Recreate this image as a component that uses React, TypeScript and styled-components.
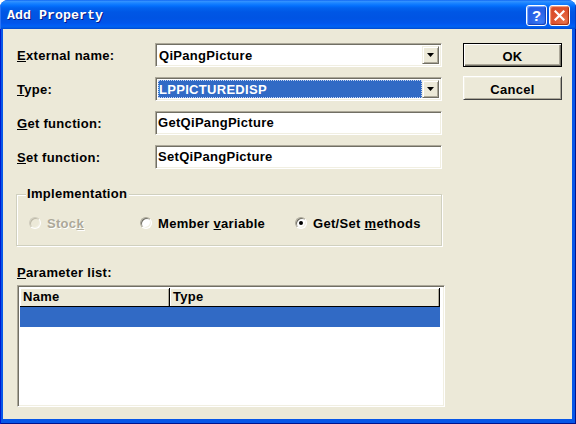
import React from "react";
import styled, { createGlobalStyle, css } from "styled-components";

const GlobalStyle = createGlobalStyle`
  html, body { margin: 0; padding: 0; background: #ffffff; }
  body { width: 576px; height: 424px; overflow: hidden; }
  #root { width: 576px; height: 424px; }
`;

const FACE = "#ECE9D8";
const SEL = "#316AC5";

const uiFont = css`
  font-family: "Liberation Sans", Arial, sans-serif;
  font-size: 13px;
  font-weight: bold;
  letter-spacing: 0.3px;
  color: #000;
`;

const sunken = css`
  border: 1px solid;
  border-color: #aca899 #ffffff #ffffff #aca899;
  box-shadow: inset 1px 1px 0 #716f64, inset -1px -1px 0 #f1efe2;
`;

const raised = css`
  border: 1px solid;
  border-color: #f1efe2 #716f64 #716f64 #f1efe2;
  box-shadow: inset 1px 1px 0 #ffffff, inset -1px -1px 0 #aca899;
`;

const Window = styled.div`
  width: 576px;
  height: 424px;
  display: flex;
  flex-direction: column;
  border-radius: 8px 8px 0 0;
  overflow: hidden;
  background: #0055ea;
`;

const TitleBar = styled.div`
  height: 29px;
  flex: none;
  display: flex;
  align-items: center;
  padding: 0 6px 0 7px;
  background: linear-gradient(
    to bottom,
    #0058ee 0px,
    #3a93ff 1px,
    #288eff 2px,
    #127dff 4px,
    #036ffc 6px,
    #0262ee 8px,
    #0057e5 12px,
    #0054e3 18px,
    #0055eb 23px,
    #005bf5 25px,
    #0062ef 27px,
    #0047cf 29px
  );
  box-shadow: inset 1px 0 0 #2b74f5, inset -1px 0 0 #0040c8;
`;

const Title = styled.div`
  flex: 1;
  font-family: "Liberation Mono", "Courier New", monospace;
  font-size: 13.33px;
  font-weight: bold;
  color: #ffffff;
  text-shadow: 1px 1px 0 #0a1883;
  padding-top: 1px;
`;

const Controls = styled.div`
  display: flex;
  gap: 2px;
  padding-top: 1px;
`;

const CapButton = styled.div<{ $kind: "help" | "close" }>`
  width: 21px;
  height: 21px;
  box-sizing: border-box;
  border: 1px solid #ffffff;
  border-radius: 3px;
  display: flex;
  align-items: center;
  justify-content: center;
  color: #ffffff;
  font-family: "Liberation Sans", Arial, sans-serif;
  font-weight: bold;
  font-size: 15px;
  ${(p) =>
    p.$kind === "help"
      ? css`
          background: radial-gradient(circle at 70% 80%, #3d7cf6 0%, #2a63e6 45%, #1f5ae8 100%);
          box-shadow: inset -1px -1px 1px #1440b8, inset 1px 1px 1px #7fb0ff;
        `
      : css`
          background: radial-gradient(circle at 75% 80%, #e8734a 0%, #de5330 50%, #d44520 100%);
          box-shadow: inset -1px -1px 1px #a8300f, inset 1px 1px 1px #f4a88a;
        `}
`;

const Frame = styled.div`
  flex: 1;
  display: flex;
  padding: 0 4px 5px 3px;
  background: #0757e8;
  box-shadow: inset 1px 0 0 #0019cf, inset -1px 0 0 #00138c, inset 0 -1px 0 #00138c;
`;

const Client = styled.div`
  flex: 1;
  background: ${FACE};
  display: grid;
  grid-template-columns: 426px 99px;
  column-gap: 21px;
  align-items: start;
  padding: 14px 0 0 13px;
`;

const Main = styled.div`
  display: flex;
  flex-direction: column;
`;

const FormGrid = styled.div`
  display: grid;
  grid-template-columns: 139px 287px;
  grid-auto-rows: 24px;
  row-gap: 10px;
  align-items: center;
`;

const Label = styled.label`
  ${uiFont};
  padding-left: 1px;
  line-height: 15px;
  padding-top: 1px;
`;

const TextBox = styled.div`
  ${sunken};
  ${uiFont};
  height: 24px;
  box-sizing: border-box;
  background: #ffffff;
  display: flex;
  align-items: center;
  padding: 0 2px 0 2px;
  line-height: 16px;
`;

const ComboBox = styled.div`
  ${sunken};
  height: 24px;
  box-sizing: border-box;
  background: #ffffff;
  display: flex;
  padding: 2px;
`;

const ComboText = styled.div<{ $selected?: boolean }>`
  ${uiFont};
  flex: 1;
  display: flex;
  align-items: center;
  padding-left: 1px;
  box-sizing: border-box;
  ${(p) =>
    p.$selected &&
    css`
      background: ${SEL};
      color: #ffffff;
      outline: 1px dotted #c7d6f3;
      outline-offset: -1px;
    `}
`;

const DropButton = styled.div`
  ${raised};
  width: 17px;
  box-sizing: border-box;
  background: ${FACE};
  display: flex;
  align-items: center;
  justify-content: center;
`;

const Group = styled.fieldset`
  margin: 18px 0 0 0;
  padding: 12px 0 12px 12px;
  border: 1px solid #d0d0bf;
  box-shadow: inset 1px 1px 0 #ffffff, 1px 1px 0 #ffffff;
  min-width: 0;
`;

const Legend = styled.legend`
  ${uiFont};
  line-height: 14px;
  padding: 0 2px 0 1px;
  margin-left: -3px;
  background: ${FACE};
`;

const RadioRow = styled.div`
  display: grid;
  grid-template-columns: 111px 155px 1fr;
  height: 20px;
  align-items: center;
`;

const RadioItem = styled.div<{ $disabled?: boolean }>`
  ${uiFont};
  display: flex;
  align-items: center;
  gap: 6px;
  ${(p) =>
    p.$disabled &&
    css`
      color: #aca899;
      text-shadow: 1px 1px 0 #ffffff;
    `}
`;

const RadioDot = styled.span<{ $checked?: boolean; $disabled?: boolean }>`
  width: 12px;
  height: 12px;
  box-sizing: border-box;
  border-radius: 50%;
  border: 1px solid;
  border-color: #aca899 #ffffff #ffffff #aca899;
  box-shadow: inset 1px 1px 0 #716f64, inset -1px -1px 0 #f1efe2;
  background: #ffffff;
  display: flex;
  align-items: center;
  justify-content: center;
  flex: none;
  ${(p) =>
    p.$disabled &&
    css`
      background: ${FACE};
      border-color: #cfccbd #ffffff #ffffff #cfccbd;
      box-shadow: inset 1px 1px 0 #bdb9a8, inset -1px -1px 0 #f1efe2;
    `}
  &::after {
    content: "";
    width: 4px;
    height: 4px;
    border-radius: 50%;
    background: #000;
    display: ${(p) => (p.$checked ? "block" : "none")};
  }
`;

const ListLabel = styled.div`
  ${uiFont};
  line-height: 15px;
  margin-top: 19px;
  padding-left: 1px;
`;

const ListView = styled.div`
  ${sunken};
  margin: 5px 0 0 1px;
  width: 428px;
  height: 122px;
  box-sizing: border-box;
  background: #ffffff;
  padding: 2px;
  display: flex;
  flex-direction: column;
`;

const HeaderRow = styled.div`
  display: grid;
  grid-template-columns: 150px 1fr;
  height: 19px;
  box-sizing: border-box;
  border-bottom: 1px solid #000;
  background: ${FACE};
  margin-right: 2px;
`;

const HeaderCell = styled.div`
  ${uiFont};
  line-height: 18px;
  padding-left: 3px;
  border-right: 1px solid #000;
  box-shadow: inset 1px 1px 0 #ffffff, inset -1px 0 0 #aca899;
  overflow: hidden;
`;

const ListRow = styled.div<{ $selected?: boolean }>`
  height: 20px;
  background: ${(p) => (p.$selected ? SEL : "#ffffff")};
  margin-right: 2px;
`;

const Buttons = styled.div`
  display: flex;
  flex-direction: column;
  gap: 9px;
  padding-top: 0;
`;

const PushButton = styled.button<{ $default?: boolean }>`
  ${uiFont};
  width: 99px;
  height: 24px;
  box-sizing: border-box;
  background: ${FACE};
  padding: 2px 0 0 0;
  margin: 0;
  ${(p) =>
    p.$default
      ? css`
          border: 1px solid #000;
          box-shadow: inset 1px 1px 0 #ffffff, inset -1px -1px 0 #716f64, inset -2px -2px 0 #aca899;
        `
      : css`
          border: 1px solid;
          border-color: #ffffff #404040 #404040 #ffffff;
          box-shadow: inset 1px 1px 0 #f1efe2, inset -1px -1px 0 #aca899;
        `}
`;

const Arrow = () => (
  <svg width="7" height="4" viewBox="0 0 7 4" aria-hidden>
    <path d="M0 0h7L3.5 4z" fill="#000" />
  </svg>
);

const CloseGlyph = () => (
  <svg width="11" height="11" viewBox="0 0 11 11" aria-hidden>
    <path d="M1.5 1.5L9.5 9.5M9.5 1.5L1.5 9.5" stroke="#fff" strokeWidth="2.2" strokeLinecap="square" />
  </svg>
);

export default function App() {
  return (
    <>
      <GlobalStyle />
      <Window>
        <TitleBar>
          <Title>Add Property</Title>
          <Controls>
            <CapButton $kind="help">?</CapButton>
            <CapButton $kind="close">
              <CloseGlyph />
            </CapButton>
          </Controls>
        </TitleBar>
        <Frame>
          <Client>
            <Main>
              <FormGrid>
                <Label>
                  <u>E</u>xternal name:
                </Label>
                <ComboBox>
                  <ComboText>QiPangPicture</ComboText>
                  <DropButton>
                    <Arrow />
                  </DropButton>
                </ComboBox>
                <Label>
                  <u>T</u>ype:
                </Label>
                <ComboBox>
                  <ComboText $selected>LPPICTUREDISP</ComboText>
                  <DropButton>
                    <Arrow />
                  </DropButton>
                </ComboBox>
                <Label>
                  <u>G</u>et function:
                </Label>
                <TextBox>GetQiPangPicture</TextBox>
                <Label>
                  <u>S</u>et function:
                </Label>
                <TextBox>SetQiPangPicture</TextBox>
              </FormGrid>

              <Group>
                <Legend>Implementation</Legend>
                <RadioRow>
                  <RadioItem $disabled>
                    <RadioDot $disabled />
                    <span>
                      Stoc<u>k</u>
                    </span>
                  </RadioItem>
                  <RadioItem>
                    <RadioDot />
                    <span>
                      Member <u>v</u>ariable
                    </span>
                  </RadioItem>
                  <RadioItem>
                    <RadioDot $checked />
                    <span>
                      Get/Set <u>m</u>ethods
                    </span>
                  </RadioItem>
                </RadioRow>
              </Group>

              <ListLabel>
                <u>P</u>arameter list:
              </ListLabel>
              <ListView>
                <HeaderRow>
                  <HeaderCell>Name</HeaderCell>
                  <HeaderCell>Type</HeaderCell>
                </HeaderRow>
                <ListRow $selected />
              </ListView>
            </Main>
            <Buttons>
              <PushButton $default>OK</PushButton>
              <PushButton>Cancel</PushButton>
            </Buttons>
          </Client>
        </Frame>
      </Window>
    </>
  );
}
